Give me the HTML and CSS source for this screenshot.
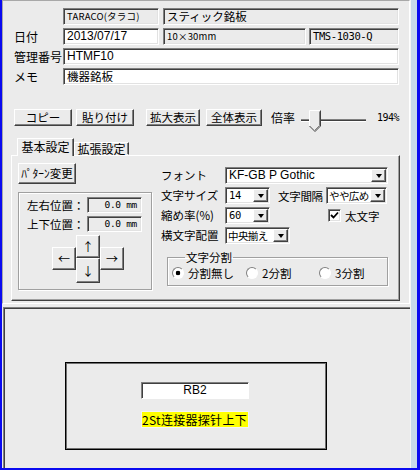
FILE: index.html
```html
<!DOCTYPE html>
<html lang="ja">
<head>
<meta charset="utf-8">
<link rel="stylesheet" href="styles.css">
</head>
<body>
<div class="window">
  <div class="main">
    <div class="top-panel">
      <div class="fields">
        <div class="row">
          <span class="lbl"></span>
          <span class="fld ro w96 small">TARACO(タラコ)</span>
          <span class="fld ro w236 gap4 mid">スティック銘板</span>
        </div>
        <div class="row">
          <span class="lbl">日付</span>
          <span class="fld inp w96 lat">2013/07/17</span>
          <span class="fld ro w143 gap4 small">10×30mm</span>
          <span class="fld ro w90 gap3 mono">TMS-1030-Q</span>
        </div>
        <div class="row">
          <span class="lbl">管理番号</span>
          <span class="fld inp w336 lat">HTMF10</span>
        </div>
        <div class="row">
          <span class="lbl">メモ</span>
          <span class="fld inp w336 mid">機器銘板</span>
        </div>
      </div>

      <div class="toolbar">
        <button class="btn b-copy">コピー</button>
        <button class="btn b-paste">貼り付け</button>
        <button class="btn b-zoom">拡大表示</button>
        <button class="btn b-all">全体表示</button>
        <span class="ratio">倍率</span>
        <svg class="slider" width="68" height="24" viewBox="0 0 68 24">
          <line x1="2" y1="9.5" x2="67" y2="9.5" stroke="#808080"/>
          <line x1="2" y1="10.5" x2="67" y2="10.5" stroke="#404040"/>
          <line x1="2" y1="11.5" x2="67" y2="11.5" stroke="#ffffff"/>
          <polygon points="10.5,0.5 21.5,0.5 21.5,16 16,21.5 10.5,16" fill="#ebebeb"/>
          <polyline points="10.5,16 10.5,0.5 21.5,0.5" fill="none" stroke="#ffffff"/>
          <polyline points="21.5,0.5 21.5,16 16,21.5 10.5,16" fill="none" stroke="#404040"/>
          <polyline points="20.5,1.5 20.5,15.5 16,20" fill="none" stroke="#808080"/>
        </svg>
        <span class="pct">194%</span>
      </div>

      <div class="tabs">
        <div class="tabstrip">
          <span class="tab active">基本設定</span>
          <span class="tab">拡張設定</span>
        </div>
        <div class="tabbody">
          <div class="leftcol">
            <button class="btn b-pattern">ﾊﾟﾀｰﾝ変更</button>
            <div class="group posgroup">
              <div class="posrow">
                <span class="poslbl">左右位置：</span>
                <span class="fld ro posval">0.0 mm</span>
              </div>
              <div class="posrow">
                <span class="poslbl">上下位置：</span>
                <span class="fld ro posval">0.0 mm</span>
              </div>
              <div class="arrows">
                <button class="btn arr up">↑</button>
                <button class="btn arr left">←</button>
                <button class="btn arr right">→</button>
                <button class="btn arr down">↓</button>
              </div>
            </div>
          </div>
          <div class="rightcol">
            <div class="frow">
              <span class="flbl">フォント</span>
              <span class="sel w163"><span class="seltxt lat">KF-GB P Gothic</span><span class="dd"><i></i></span></span>
            </div>
            <div class="frow">
              <span class="flbl">文字サイズ</span>
              <span class="sel w45"><span class="seltxt mono">14</span><span class="dd"><i></i></span></span>
              <span class="flbl2">文字間隔</span>
              <span class="sel w61"><span class="seltxt tight">やや広め</span><span class="dd"><i></i></span></span>
            </div>
            <div class="frow">
              <span class="flbl">縮め率(%)</span>
              <span class="sel w45"><span class="seltxt mono">60</span><span class="dd"><i></i></span></span>
              <span class="chk">
                <svg width="9" height="9" viewBox="0 0 9 9"><polyline points="1,4 3.5,6.5 8,1.5" fill="none" stroke="#000" stroke-width="1.8"/></svg>
              </span>
              <span class="chklbl">太文字</span>
            </div>
            <div class="frow">
              <span class="flbl">横文字配置</span>
              <span class="sel w65"><span class="seltxt tight">中央揃え</span><span class="dd"><i></i></span></span>
            </div>
            <fieldset class="split">
              <legend>文字分割</legend>
              <div class="radios">
                <span class="opt o1"><span class="radio on"></span><span>分割無し</span></span>
                <span class="opt o2"><span class="radio"></span><span>2分割</span></span>
                <span class="opt o3"><span class="radio"></span><span>3分割</span></span>
              </div>
            </fieldset>
          </div>
        </div>
      </div>
    </div>

    <div class="bottom-panel">
      <div class="preview">
        <div class="rb">RB2</div>
        <div class="yel">2St连接器探针上下</div>
      </div>
    </div>
  </div>
  <div class="vstrip"></div>
</div>
</body>
</html>
```

FILE: styles.css
```css
* { box-sizing: border-box; }

html, body {
  margin: 0;
  padding: 0;
  background: #ebebeb;
}

body {
  font-family: "Noto Sans CJK JP", "Noto Sans", sans-serif;
  font-size: 11.5px;
  color: #000;
}

.window {
  width: 420px;
  height: 470px;
  display: flex;
  border-left: 2px solid #0a0af0;
  border-right: 3px solid #0a0af0;
  border-bottom: 2px solid #0a0af0;
  overflow: hidden;
}

.main {
  width: 408px;
  display: flex;
  flex-direction: column;
}

.vstrip {
  width: 7px;
  background: #c7d9ea;
  border-left: 1px solid #f4f4f4;
}

/* ---------- top panel ---------- */
.top-panel {
  height: 304px;
  border-top: 1px solid #a8a8a8;
  border-left: 1px solid #a8a8a8;
  border-bottom: 1px solid #ffffff;
  border-right: 1px solid #ffffff;
  padding-bottom: 2px;
}

.fields {
  padding: 7px 0 0 11px;
}

.row {
  display: flex;
  align-items: center;
  height: 17px;
  margin-bottom: 3px;
}

.lbl {
  width: 49px;
  font-size: 12px;
  line-height: 17px;
  white-space: nowrap;
}

.fld {
  display: block;
  height: 17px;
  border: 1px solid;
  border-color: #808080 #ffffff #ffffff #808080;
  box-shadow: inset 1px 1px #404040, inset -1px -1px #e2e2e2;
  padding: 0 0 0 3px;
  line-height: 15px;
  white-space: nowrap;
  overflow: hidden;
}

.ro { background: #ebebeb; }
.inp { background: #ffffff; }

.small { font-size: 9.5px; letter-spacing: 0.2px; }
.mid { font-size: 11.5px; }
.lat { font-family: "Liberation Sans", "Noto Sans CJK JP", sans-serif; font-size: 12px; }
.mono { font-family: "DejaVu Sans Mono", "Liberation Mono", monospace; font-size: 10.5px; letter-spacing: -0.4px; }

.w96 { width: 96px; }
.w236 { width: 236px; }
.w143 { width: 143px; }
.w90 { width: 90px; }
.w336 { width: 336px; }
.gap4 { margin-left: 4px; }
.gap3 { margin-left: 3px; }

/* ---------- buttons ---------- */
.btn {
  font-family: "Noto Sans CJK JP", sans-serif;
  font-size: 11.5px;
  line-height: 13px;
  background: #ebebeb;
  color: #000;
  border: 1px solid;
  border-color: #ffffff #404040 #404040 #ffffff;
  box-shadow: inset -1px -1px #808080;
  padding: 0;
  margin: 0;
  height: 17px;
  white-space: nowrap;
}

.toolbar {
  display: flex;
  align-items: flex-start;
  height: 17px;
  margin-top: 24px;
  padding-left: 11px;
}

.b-copy { width: 58px; }
.b-paste { width: 58px; margin-left: 4px; }
.b-zoom { width: 54px; margin-left: 12px; }
.b-all { width: 56px; margin-left: 6px; }

.ratio {
  margin-left: 9px;
  font-size: 12px;
  line-height: 17px;
}

.slider {
  margin-left: 4px;
  margin-top: 1px;
  flex: none;
  overflow: visible;
}

.pct {
  margin-left: 10px;
  font-family: "DejaVu Sans Mono", monospace;
  font-size: 10px;
  letter-spacing: -0.5px;
  line-height: 17px;
}

/* ---------- tabs ---------- */
.tabs {
  margin-top: 12px;
  margin-left: 8px;
  width: 389px;
}

.tabstrip {
  display: flex;
  align-items: flex-end;
  height: 17px;
  padding-left: 6px;
}

.tab {
  display: block;
  height: 13px;
  width: 55px;
  border: 1px solid;
  border-color: #ffffff #404040 transparent #ffffff;
  box-shadow: inset -1px 0 #808080;
  font-size: 12px;
  line-height: 12px;
  text-align: center;
  white-space: nowrap;
}

.tab.active {
  width: 57px;
  height: 18px;
  line-height: 16px;
  margin-bottom: -1px;
  background: #ebebeb;
  position: relative;
  z-index: 1;
  border-bottom: none;
}

.tabbody {
  height: 146px;
  border: 1px solid;
  border-color: #ffffff #404040 #404040 #ffffff;
  box-shadow: inset -1px -1px #a0a0a0;
  display: flex;
}

.leftcol {
  width: 140px;
  padding: 7px 0 0 6px;
}

.b-pattern {
  width: 58px;
  height: 21px;
  display: block;
  font-size: 11.5px;
}

.group {
  border: 1px solid #a0a0a0;
  box-shadow: inset 1px 1px #ffffff, 1px 1px #ffffff;
}

.posgroup {
  margin-top: 8px;
  width: 134px;
  height: 98px;
  padding-top: 3px;
}

.posrow {
  display: flex;
  align-items: center;
  height: 16px;
  margin-top: 1px;
  margin-bottom: 3px;
  padding-left: 8px;
}

.poslbl {
  width: 60px;
  font-size: 11.5px;
  line-height: 16px;
  white-space: nowrap;
}

.posval {
  width: 55px;
  height: 16px;
  text-align: right;
  padding-right: 4px;
  font-family: "DejaVu Sans Mono", monospace;
  font-size: 9.5px;
  letter-spacing: -0.3px;
  line-height: 14px;
}

.arrows {
  display: grid;
  grid-template-columns: 24px 24px 24px;
  grid-template-rows: 12px 11px 12px 13px;
  margin-left: 33px;
  margin-top: 0px;
}

.arr {
  height: auto;
  font-size: 12px;
  line-height: 14px;
}

.arr.up { grid-column: 2; grid-row: 1 / 3; }
.arr.left { grid-column: 1; grid-row: 2 / 4; }
.arr.right { grid-column: 3; grid-row: 2 / 4; }
.arr.down { grid-column: 2; grid-row: 3 / 5; }

/* ---------- right column ---------- */
.rightcol {
  padding: 11px 0 0 9px;
  width: 240px;
}

.frow {
  display: flex;
  align-items: center;
  height: 17px;
  margin-bottom: 3px;
}

.flbl {
  width: 64px;
  font-size: 11.5px;
  line-height: 17px;
  white-space: nowrap;
}

.flbl2 {
  margin-left: 8px;
  width: 48px;
  font-size: 11.5px;
  letter-spacing: -0.3px;
  white-space: nowrap;
}

.sel {
  display: flex;
  height: 17px;
  background: #ffffff;
  border: 1px solid;
  border-color: #808080 #ffffff #ffffff #808080;
  box-shadow: inset 1px 1px #404040, inset -1px -1px #e2e2e2;
  padding: 1px 1px 1px 1px;
}

.seltxt {
  flex: 1;
  min-width: 0;
  padding-left: 2px;
  line-height: 13px;
  font-size: 11.5px;
  white-space: nowrap;
  overflow: hidden;
}

.seltxt.lat { font-size: 12px; }
.seltxt.mono { font-size: 10.5px; }
.seltxt.tight { font-size: 10.5px; letter-spacing: -0.6px; padding-left: 1px; }

.dd {
  flex: none;
  width: 15px;
  height: 13px;
  background: #ebebeb;
  border: 1px solid;
  border-color: #ffffff #404040 #404040 #ffffff;
  box-shadow: inset -1px -1px #808080;
  display: flex;
  align-items: center;
  justify-content: center;
}

.dd i {
  display: block;
  width: 0;
  height: 0;
  border-left: 3.5px solid transparent;
  border-right: 3.5px solid transparent;
  border-top: 4px solid #000;
}

.w163 { width: 163px; }
.w45 { width: 45px; }
.w61 { width: 61px; }
.w65 { width: 65px; }

.chk {
  margin-left: 58px;
  width: 13px;
  height: 13px;
  background: #ffffff;
  border: 1px solid;
  border-color: #808080 #ffffff #ffffff #808080;
  box-shadow: inset 1px 1px #404040, inset -1px -1px #e2e2e2;
  display: flex;
  align-items: center;
  justify-content: center;
}

.chklbl {
  margin-left: 4px;
  font-size: 11.5px;
}

.split {
  margin: 6px 0 0 6px;
  padding: 0 0 5px 4px;
  width: 221px;
  border: 1px solid #a0a0a0;
  box-shadow: inset 1px 1px #ffffff, 1px 1px #ffffff;
}

.split legend {
  margin-left: 13px;
  padding: 0 1px;
  font-size: 11.5px;
  line-height: 14px;
}

.radios {
  display: flex;
  align-items: center;
  height: 14px;
  margin-top: 2px;
}

.opt {
  display: flex;
  align-items: center;
  white-space: nowrap;
  font-size: 11.5px;
}

.o1 { width: 74px; }
.o2 { width: 73px; }

.radio {
  width: 12px;
  height: 12px;
  border-radius: 50%;
  border: 1px solid;
  border-color: #808080 #ffffff #ffffff #808080;
  background: #ffffff;
  margin-right: 4px;
  flex: none;
}

.radio.on {
  background: radial-gradient(circle, #000 0 2px, #ffffff 2.6px);
}

/* ---------- bottom panel ---------- */
.bottom-panel {
  flex: 1;
  margin-top: 3px;
  margin-left: 1px;
  border-top: 1px solid #808080;
  border-left: 1px solid #808080;
  box-shadow: inset 1px 1px #404040;
  padding: 54px 0 0 61px;
}

.preview {
  width: 262px;
  height: 88px;
  border: 1px solid #000;
  box-shadow: inset 1px 1px #707070, inset -1px -1px #707070;
  padding: 19px 0 0 75px;
}

.rb {
  width: 108px;
  height: 17px;
  background: #ffffff;
  border: 1px solid;
  border-color: #808080 #ffffff #ffffff #808080;
  box-shadow: inset 1px 1px #404040;
  text-align: center;
  font-family: "Liberation Sans", sans-serif;
  font-size: 12px;
  line-height: 15px;
}

.yel {
  margin-top: 12px;
  width: 108px;
  height: 17px;
  background: #ffff00;
  border: 1px solid #f4f4f4;
  font-family: "Noto Sans CJK SC", sans-serif;
  font-size: 12px;
  letter-spacing: 0.3px;
  line-height: 15px;
  white-space: nowrap;
  overflow: hidden;
  padding-left: 0;
}
```
